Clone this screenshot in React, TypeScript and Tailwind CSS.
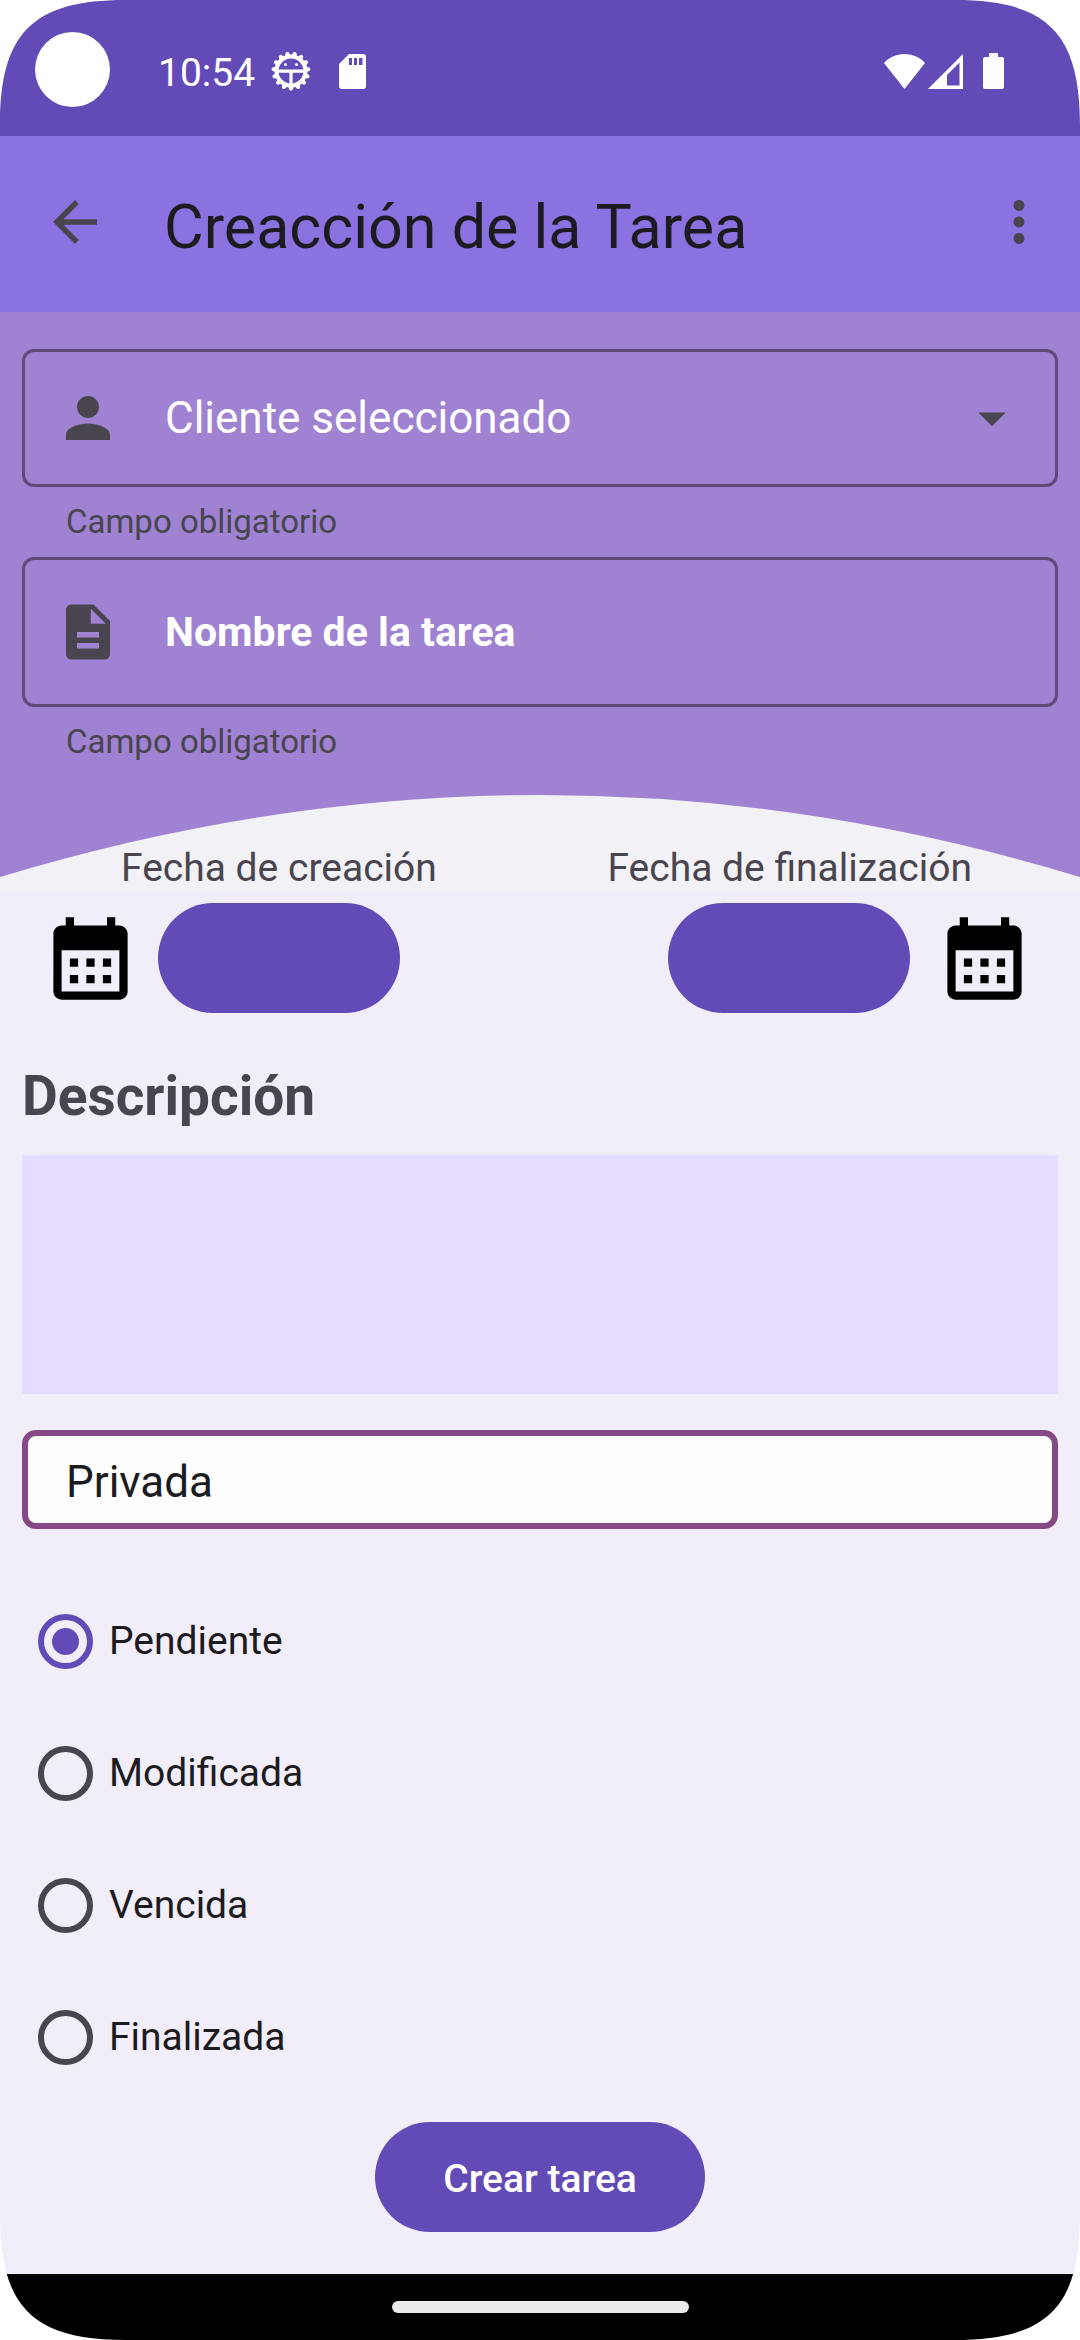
import React, { useState } from 'react';

const teeth = Array.from({ length: 15 }, (_, i) => i * 24);

function DebugIcon() {
  return (
    <svg viewBox="0 0 40 40" className="size-10" aria-hidden="true">
      <circle cx="20" cy="20" r="14.5" fill="none" stroke="currentColor" strokeWidth="4" />
      {teeth.map((angle) => (
        <path
          key={angle}
          d="M17.2 35.500h5.600l-1.300 3.400q-1.500 1.200-3 0z"
          fill="currentColor"
          transform={`rotate(${angle} 20 20)`}
        />
      ))}
      <path d="M7 18.600h26v3.200H21.600V34h-3.200V21.800H7z" fill="currentColor" />
      <circle cx="14.500" cy="13.500" r="1.500" fill="currentColor" />
      <circle cx="25.500" cy="13.500" r="1.500" fill="currentColor" />
    </svg>
  );
}

function SdCardIcon() {
  return (
    <svg viewBox="0 0 27 35" className="h-[35px] w-[27px]" aria-hidden="true">
      <path
        fillRule="evenodd"
        fill="currentColor"
        d="M10 0h14a3 3 0 0 1 3 3v29a3 3 0 0 1-3 3H3a3 3 0 0 1-3-3V10zM10 4v7h3V4zm5 0v7h3V4zm5 0v7h3.500V4z"
      />
    </svg>
  );
}

function StatusIcons() {
  return (
    <div className="flex items-center">
      <svg viewBox="0 0 41 35" className="h-[35px] w-[41px]" aria-hidden="true">
        <path d="M20.500 35 0 9C5 3.500 12 0 20.500 0S36 3.500 41 9z" fill="currentColor" />
      </svg>
      <svg viewBox="0 0 35 35" className="ml-[3px] size-[35px]" aria-hidden="true">
        <path fillRule="evenodd" d="M0 35 35 0v35zM19 21v10.500h12.500V8.500z" fill="currentColor" />
      </svg>
      <svg viewBox="0 0 21 36" className="ml-5 h-9 w-[21px]" aria-hidden="true">
        <path
          d="M6 0h9v4h4a2 2 0 0 1 2 2v28a2 2 0 0 1-2 2H2a2 2 0 0 1-2-2V6a2 2 0 0 1 2-2h4z"
          fill="currentColor"
        />
      </svg>
    </div>
  );
}

function Glyph({ d, className }: { d: string; className: string }) {
  return (
    <svg viewBox="0 0 24 24" className={className} fill="currentColor" aria-hidden="true">
      <path d={d} />
    </svg>
  );
}

const ARROW_BACK = 'M20 11H7.830l5.590-5.590L12 4l-8 8 8 8 1.410-1.410L7.830 13H20z';
const MORE =
  'M12 8c1.100 0 2-.9 2-2s-.9-2-2-2-2 .9-2 2 .9 2 2 2zm0 2c-1.100 0-2 .9-2 2s.9 2 2 2 2-.9 2-2-.9-2-2-2zm0 6c-1.100 0-2 .9-2 2s.9 2 2 2 2-.9 2-2-.9-2-2-2z';
const PERSON =
  'M12 12c2.210 0 4-1.790 4-4s-1.790-4-4-4-4 1.790-4 4 1.790 4 4 4zm0 2c-2.670 0-8 1.340-8 4v2h16v-2c0-2.660-5.330-4-8-4z';
const DOCUMENT =
  'M14 2H6c-1.100 0-1.990.9-1.990 2L4 20c0 1.100.89 2 1.990 2H18c1.100 0 2-.9 2-2V8zm2 16H8v-2h8zm0-4H8v-2h8zm-3-5V3.500L18.500 9z';
const DROP_DOWN = 'M7 10l5 5 5-5z';
const CALENDAR =
  'M19 4h-1V2h-2v2H8V2H6v2H5c-1.110 0-1.990.9-1.990 2L3 20a2 2 0 0 0 2 2h14c1.100 0 2-.9 2-2V6c0-1.100-.9-2-2-2zm0 16H5V10h14zM9 14H7v-2h2zm4 0h-2v-2h2zm4 0h-2v-2h2zm-8 4H7v-2h2zm4 0h-2v-2h2zm4 0h-2v-2h2z';

function Corner({ className }: { className: string }) {
  return (
    <svg viewBox="0 0 125 125" className={`pointer-events-none absolute size-[125px] ${className}`} aria-hidden="true">
      <path d="M0 0v125C0 33 33 0 125 0z" fill="#fff" />
    </svg>
  );
}

const states = ['Pendiente', 'Modificada', 'Vencida', 'Finalizada'];

function StateOption({ name, checked, onSelect }: { name: string; checked: boolean; onSelect: () => void }) {
  return (
    <label className="flex h-[132px] items-center gap-4 pl-4 text-[39px] text-[#1c1b1f]">
      <input
        type="radio"
        name="estado"
        checked={checked}
        onChange={onSelect}
        className="size-[55px] appearance-none rounded-full border-6 border-[#49454f] p-2 checked:border-[#634bb7] checked:bg-[#634bb7] checked:bg-clip-content"
      />
      {name}
    </label>
  );
}

export default function App() {
  const [state, setState] = useState('Pendiente');
  return (
    <div className="relative flex min-h-screen flex-col bg-[#f2eef9] font-['Roboto',sans-serif] text-[#49454f]">
      <div className="flex h-[136px] items-center bg-[#634bb7] pt-1.5 pr-[76px] pl-[35px] text-white">
        <span className="mb-1 size-[75px] rounded-full bg-white" />
        <time className="ml-12 pt-1 text-[39px]">10:54</time>
        <div className="ml-4 flex flex-1 items-center gap-7">
          <DebugIcon />
          <SdCardIcon />
        </div>
        <StatusIcons />
      </div>

      <header className="flex h-44 items-center bg-[#8b72e1] pr-7 pb-1 pl-[42px]">
        <button type="button" aria-label="Volver">
          <Glyph d={ARROW_BACK} className="size-[66px]" />
        </button>
        <h1 className="ml-14 flex-1 pt-3 text-[61px] text-[#1c1b1f]">Creacción de la Tarea</h1>
        <button type="button" aria-label="Más opciones">
          <Glyph d={MORE} className="size-[66px]" />
        </button>
      </header>

      <main>
        <div className="bg-[#9f82d1]">
          <div className="px-[22px] pt-[37px]">
            <div className="relative flex h-[138px] items-center rounded-xl border-3 border-[#5e4b79] pl-[30px]">
              <Glyph d={PERSON} className="size-[66px]" />
              <select
                aria-label="Cliente seleccionado"
                aria-describedby="cliente-ayuda"
                className="h-full flex-1 appearance-none bg-transparent pl-11 text-[44px] text-white"
              >
                <option>Cliente seleccionado</option>
              </select>
              <Glyph d={DROP_DOWN} className="pointer-events-none absolute right-[30px] size-[66px]" />
            </div>
            <p id="cliente-ayuda" className="flex h-[70px] items-center pl-11 text-[33px]">
              Campo obligatorio
            </p>
            <div className="flex h-[150px] items-center rounded-xl border-3 border-[#5e4b79] pl-[30px]">
              <Glyph d={DOCUMENT} className="size-[66px]" />
              <input
                type="text"
                aria-label="Nombre de la tarea"
                aria-describedby="nombre-ayuda"
                placeholder="Nombre de la tarea"
                className="h-full flex-1 bg-transparent pl-11 text-[41px] font-bold text-white placeholder:text-white"
              />
            </div>
            <p id="nombre-ayuda" className="flex h-[70px] items-center pl-11 text-[33px]">
              Campo obligatorio
            </p>
          </div>

          <div className="relative mt-[18px] flex h-[97px] items-end justify-between pr-[108px] pl-[121px] text-[39px] leading-12">
            <svg
              viewBox="0 0 1080 97"
              preserveAspectRatio="none"
              className="absolute inset-0 size-full"
              aria-hidden="true"
            >
              <path d="M0 82Q540 -82 1080 82V97H0z" fill="#f2f1f6" />
            </svg>
            <label htmlFor="fecha-creacion" className="relative">
              Fecha de creación
            </label>
            <label htmlFor="fecha-finalizacion" className="relative">
              Fecha de finalización
            </label>
          </div>
        </div>

        <div className="flex items-center justify-between pt-[11px] pr-[46px] pl-[41px]">
          <div className="flex items-center gap-[18px]">
            <Glyph d={CALENDAR} className="size-[99px] text-black" />
            <button type="button" id="fecha-creacion" className="h-[110px] w-[242px] rounded-full bg-[#634bb7]" />
          </div>
          <div className="flex items-center gap-[25px]">
            <button type="button" id="fecha-finalizacion" className="h-[110px] w-[242px] rounded-full bg-[#634bb7]" />
            <Glyph d={CALENDAR} className="size-[99px] text-black" />
          </div>
        </div>

        <div className="flex flex-col px-[22px]">
          <label htmlFor="descripcion" className="mt-[51px] text-[55px] leading-[64px] font-bold">
            Descripción
          </label>
          <textarea id="descripcion" className="mt-[27px] h-[239px] resize-none bg-[#e6dcff] p-4 text-[44px]" />
          <select
            aria-label="Visibilidad"
            className="mt-9 h-[99px] appearance-none rounded-[14px] border-6 border-[#864985] bg-[#fdfdfe] pt-1 pl-[38px] text-[44px] text-[#1c1b1f]"
          >
            <option>Privada</option>
            <option>Pública</option>
          </select>
          <fieldset aria-label="Estado" className="mt-[46px]">
            {states.map((name) => (
              <StateOption key={name} name={name} checked={state === name} onSelect={() => setState(name)} />
            ))}
          </fieldset>
          <button
            type="button"
            className="mt-[19px] h-[110px] self-center rounded-full bg-[#634bb7] px-[68px] pt-1 text-[39px] font-medium text-white"
          >
            Crear tarea
          </button>
        </div>
      </main>

      <footer className="mt-auto flex h-[66px] items-center justify-center bg-black">
        <span className="h-3 w-[297px] rounded-full bg-[#ebebeb]" />
      </footer>

      <Corner className="top-0 left-0" />
      <Corner className="top-0 right-0 rotate-90" />
      <Corner className="right-0 bottom-0 rotate-180" />
      <Corner className="bottom-0 left-0 -rotate-90" />
    </div>
  );
}
